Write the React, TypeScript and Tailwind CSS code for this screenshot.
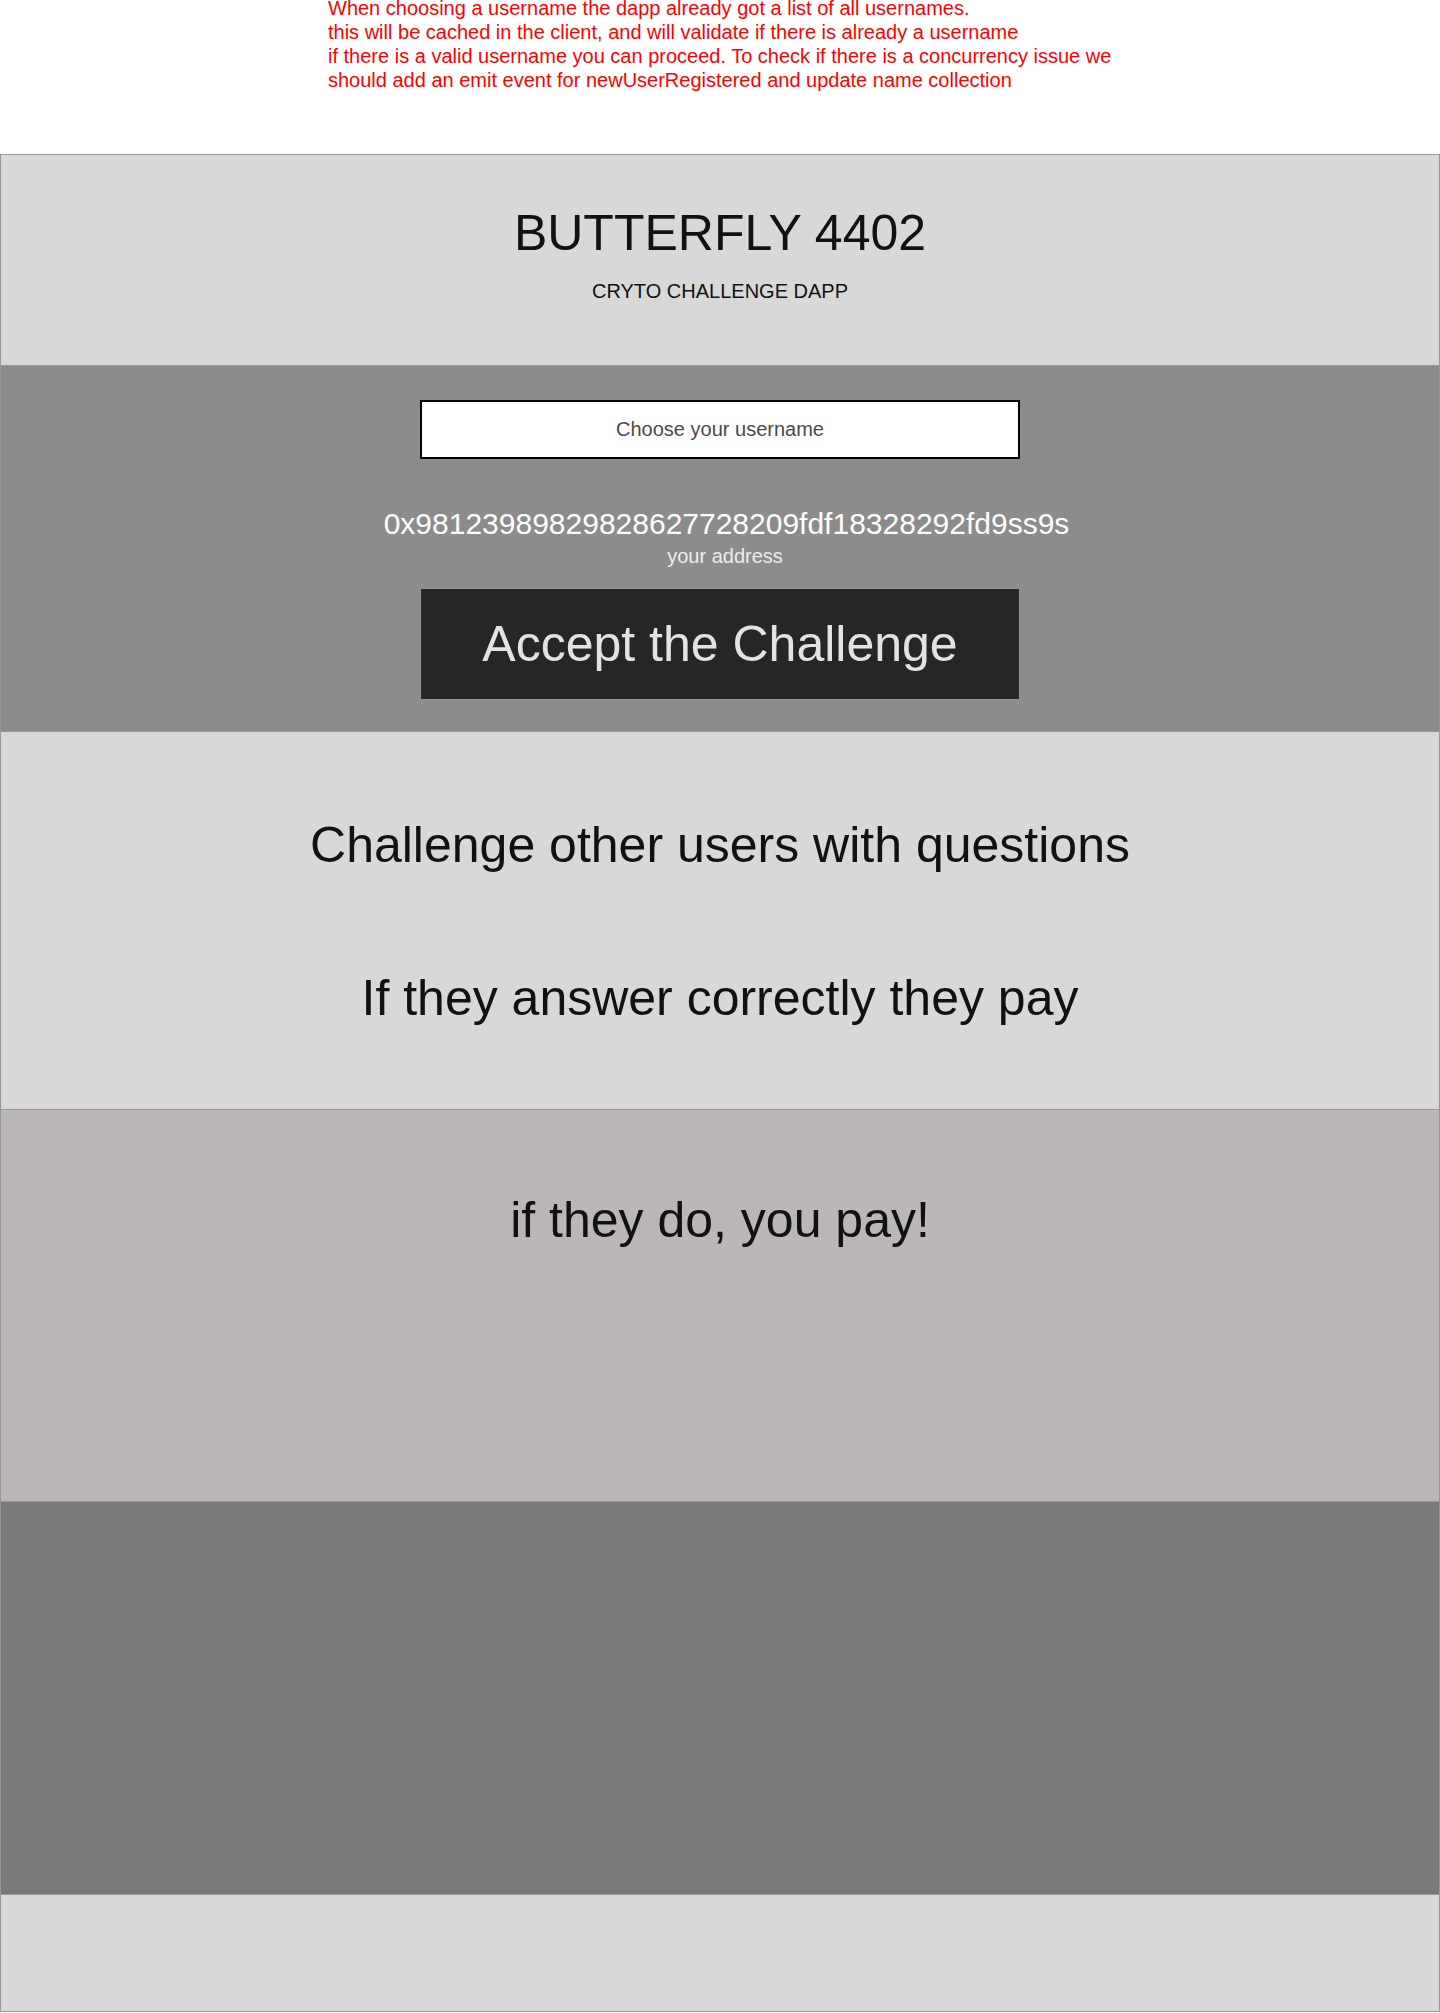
import React from "react";

export default function App() {
  return (
    <div className="w-[1440px] min-h-[2013px] bg-white font-['Liberation_Sans',Arial,sans-serif] text-[#111111]">
      <div className="ml-[328px] -mt-[4px] h-[158px] text-[20px] leading-[24px] text-[#ff0000]">
        <p>When choosing a username the dapp already got a list of all usernames.</p>
        <p>this will be cached in the client, and will validate if there is already a username</p>
        <p>if there is a valid username you can proceed. To check if there is a concurrency issue we</p>
        <p>should add an emit event for newUserRegistered and update name collection</p>
      </div>

      <div className="border border-[#979797] flex flex-col">
        <section className="h-[210px] bg-[#d8d8d8] flex flex-col items-center pt-[49px]">
          <h1 className="text-[50px] leading-[58px] text-[#111111]">BUTTERFLY 4402</h1>
          <p className="mt-[17px] text-[20px] leading-[24px] text-[#111111]">CRYTO CHALLENGE DAPP</p>
        </section>

        <section className="h-[366px] border-t border-[#979797] bg-[#8c8c8c] flex flex-col items-center pt-[34px]">
          <input
            type="text"
            placeholder="Choose your username"
            className="w-[600px] h-[59px] border-2 border-black bg-white text-center text-[20px] text-[#4a4a4a] placeholder:text-[#4a4a4a] outline-none"
          />
          <p className="mt-[47px] ml-[13px] text-[30px] leading-[36px] text-white">0x98123989829828627728209fdf18328292fd9ss9s</p>
          <p className="mt-[2px] ml-[10px] text-[20px] leading-[24px] text-[#ececec]">your address</p>
          <button className="mt-[20px] w-[600px] h-[112px] border border-[#979797] bg-[#262626] text-[50px] leading-[58px] text-[#e3e3e3]">
            Accept the Challenge
          </button>
        </section>

        <section className="h-[378px] border-t border-[#979797] bg-[#d8d8d8] flex flex-col items-center pt-[84px]">
          <p className="text-[50px] leading-[58px]">Challenge other users with questions</p>
          <p className="mt-[95px] text-[50px] leading-[58px]">If they answer correctly they pay</p>
        </section>

        <section className="h-[392px] border-t border-[#979797] bg-[#bbb7b6] flex flex-col items-center pt-[81px]">
          <p className="text-[50px] leading-[58px]">if they do, you pay!</p>
        </section>

        <section className="h-[393px] border-t border-[#979797] bg-[#7a7a7a]" />

        <section className="h-[117px] border-t border-[#979797] bg-[#d8d8d8]" />
      </div>
    </div>
  );
}
